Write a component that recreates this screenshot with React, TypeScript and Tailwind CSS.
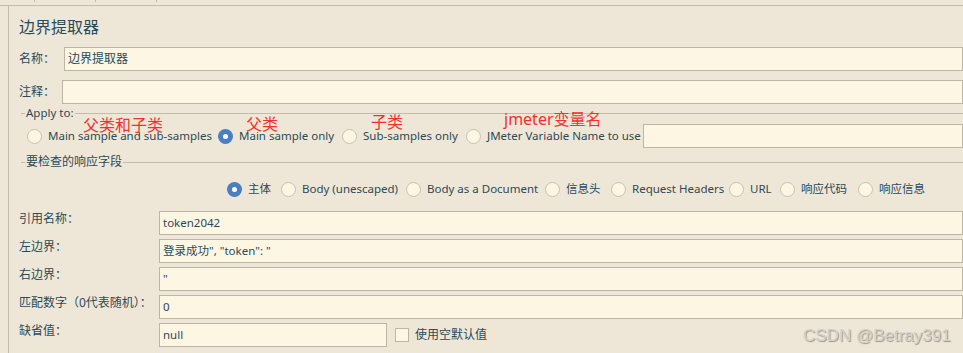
import React from 'react';

const font = { fontFamily: '"Noto Sans", "Noto Sans CJK SC", sans-serif' };

function Radio({ checked }: { checked?: boolean }) {
  return checked ? (
    <span className="w-[15px] h-[15px] rounded-full bg-[#4a7fc1] flex items-center justify-center shrink-0">
      <span className="w-[5px] h-[5px] rounded-full bg-white" />
    </span>
  ) : (
    <span className="w-[15px] h-[15px] rounded-full bg-[#fdf6e3] border border-[#c9c1b0] shrink-0" />
  );
}

function RadioItem({ label, checked, w }: { label: string; checked?: boolean; w: string }) {
  return (
    <div className={`flex items-center gap-[6px] shrink-0 ${w}`}>
      <Radio checked={checked} />
      <span className="whitespace-nowrap">{label}</span>
    </div>
  );
}

function Legend({ text }: { text: string }) {
  return (
    <div className="flex items-center h-[16px] ml-[2px]">
      <div className="w-[4px] border-t border-[#c4bcab]" />
      <span className="px-[1px] leading-[16px]">{text}</span>
      <div className="flex-1 border-t border-[#c4bcab]" />
    </div>
  );
}

const input = 'h-[24px] bg-[#fdf6e3] border border-[#bdb5a5] flex items-center px-[3px] whitespace-nowrap';

export default function App() {
  const fields = [
    { label: '引用名称：', value: 'token2042' },
    { label: '左边界：', value: '登录成功", "token": "' },
    { label: '右边界：', value: '"' },
    { label: '匹配数字（0代表随机）：', value: '0' },
  ];

  return (
    <div className="relative w-[963px] h-[353px] overflow-hidden bg-[#eee7d7] text-[#2c4a57] text-[11.5px]" style={font}>
      {/* top toolbar strip */}
      <div className="relative h-[6px] border-b border-[#c4bcab]">
        <div className="absolute left-[34px] top-0 w-px h-[2px] bg-[#c4bcab]" />
        <div className="absolute left-[95px] top-0 w-px h-[2px] bg-[#c4bcab]" />
        <div className="absolute left-[156px] top-0 w-px h-[2px] bg-[#c4bcab]" />
      </div>

      <div className="flex h-[347px]">
        <div className="w-[9px] border-r border-[#c4bcab] shrink-0" />

        <div className="flex-1 pl-[10px] flex flex-col">
          <div className="mt-[9px] h-[24px] text-[16px] leading-[24px]">边界提取器</div>

          <div className="mt-[8px] flex items-center">
            <span className="w-[45px] shrink-0 text-[12px]">名称：</span>
            <div className={`${input} flex-1 text-[12px]`}>边界提取器</div>
          </div>

          <div className="mt-[9px] flex items-center">
            <span className="w-[43px] shrink-0 text-[12px]">注释：</span>
            <div className={`${input} flex-1`} />
          </div>

          <div className="mt-[1px]">
            <Legend text="Apply to:" />
          </div>

          <div className="mt-[3px] h-[24px] flex items-center pl-[8px]">
            <RadioItem label="Main sample and sub-samples" w="w-[191px]" />
            <RadioItem label="Main sample only" checked w="w-[124px]" />
            <RadioItem label="Sub-samples only" w="w-[124px]" />
            <RadioItem label="JMeter Variable Name to use" w="w-[177px]" />
            <div className={`${input} flex-1 h-[23px]`} />
          </div>

          <div className="mt-[6px] text-[12px]">
            <Legend text="要检查的响应字段" />
          </div>

          <div className="mt-[9px] h-[20px] flex items-center pl-[208px]">
            <RadioItem label="主体" checked w="w-[54px]" />
            <RadioItem label="Body (unescaped)" w="w-[125px]" />
            <RadioItem label="Body as a Document" w="w-[139px]" />
            <RadioItem label="信息头" w="w-[66px]" />
            <RadioItem label="Request Headers" w="w-[118px]" />
            <RadioItem label="URL" w="w-[51px]" />
            <RadioItem label="响应代码" w="w-[78px]" />
            <RadioItem label="响应信息" w="w-[80px]" />
          </div>

          <div className="mt-[12px] flex flex-col gap-[4px]">
            {fields.map(f => (
              <div key={f.label} className="flex items-start">
                <span className="w-[140px] shrink-0 text-[12px] leading-[16px] whitespace-nowrap">{f.label}</span>
                <div className={`${input} flex-1`}>{f.value}</div>
              </div>
            ))}
            <div className="flex items-start">
              <span className="w-[140px] shrink-0 text-[12px] leading-[16px]">缺省值：</span>
              <div className={`${input} w-[228px]`}>null</div>
              <div className="flex items-center h-[24px] ml-[8px] gap-[6px]">
                <span className="w-[14px] h-[14px] bg-[#fdf6e3] border border-[#bdb5a5]" />
                <span className="text-[12px]">使用空默认值</span>
              </div>
            </div>
          </div>
        </div>
      </div>

      {/* red annotations drawn over the screenshot */}
      <span className="absolute left-[83px] top-[115px] text-[16px] leading-[20px] text-[#f2302c]">父类和子类</span>
      <span className="absolute left-[246px] top-[114px] text-[16px] leading-[20px] text-[#f2302c]">父类</span>
      <span className="absolute left-[371px] top-[112px] text-[16px] leading-[20px] text-[#f2302c]">子类</span>
      <span className="absolute left-[504px] top-[109px] text-[16px] leading-[20px] text-[#f2302c]">jmeter变量名</span>

      <span
        className="absolute left-[803px] top-[326px] text-[17px] leading-[20px] text-[#d4d0c8] [text-shadow:1px_1px_1px_#9a968e]"
        style={{ fontFamily: '"Liberation Sans", Arial, sans-serif' }}
      >
        CSDN @Betray391
      </span>
    </div>
  );
}
